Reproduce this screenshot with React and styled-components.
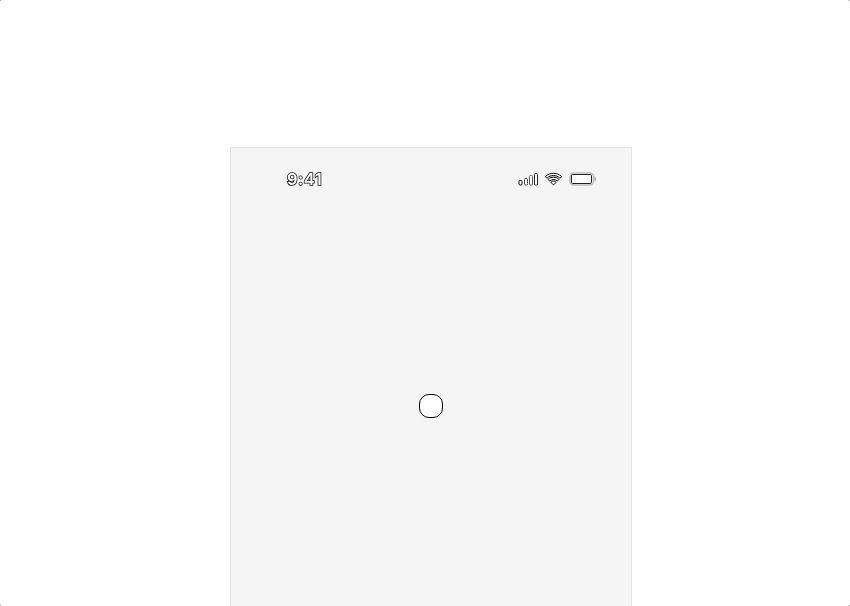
import React from "react";
import styled, { createGlobalStyle } from "styled-components";

const GlobalStyle = createGlobalStyle`
  html, body { margin: 0; background: #8c8c8c; }
  * { box-sizing: border-box; }
`;

const Page = styled.main`
  width: 850px;
  height: 606px;
  padding: 147px 0 0 230px;
  background: #fff;
  border-radius: 2px;
  overflow: hidden;
`;

const Phone = styled.section`
  display: flex;
  flex-direction: column;
  width: 402px;
  height: 459px;
  background: #f5f5f5;
  border: 1px solid #e5e5e5;
  border-bottom: 0;
`;

const StatusBar = styled.header`
  display: flex;
  align-items: center;
  justify-content: space-between;
  height: 62px;
  padding: 0 34px 0 56px;
`;

const Time = styled.time`
  font: 600 16.5px/22px Inter, sans-serif;
  letter-spacing: 0.5px;
  color: #fff;
  -webkit-text-stroke: 1.5px #000;
  paint-order: stroke fill;
  will-change: transform;
`;

const Indicators = styled.div`
  display: flex;
  align-items: center;
  gap: 6px;
`;

const Glyph = styled.svg`
  display: block;
  flex: none;
`;

const Content = styled.div`
  display: flex;
  flex: 1;
  justify-content: center;
  padding-top: 184px;
`;

const Knob = styled.svg`
  display: block;
`;

const Signal = () => (
  <Glyph width="21" height="16" viewBox="0 0 21 16" fill="#fff" stroke="#111" strokeWidth="1">
    <rect x="1" y="9.5" width="3" height="4.5" rx="1" stroke="#111" />
    <rect x="6.5" y="7.5" width="3" height="6.5" rx="1" strokeDasharray="1.6 .6" />
    <rect x="11.5" y="4.5" width="3" height="9.5" rx="1" stroke="#555" />
    <rect x="16.5" y="2.5" width="3" height="11.5" rx="1" stroke="#222" />
  </Glyph>
);

const Wifi = () => (
  <Glyph width="18" height="16" viewBox="0 0 18 16" fill="#fff" stroke="#000" strokeWidth="1">
    <path d="M8.5 2.3C5.4 2.3 2.7 3.4.6 5.3v.6l1.1 1.1h.5c3.6-3.3 9-3.3 12.6 0h.5l1.1-1.1v-.6C14.3 3.4 11.6 2.3 8.5 2.3Z" />
    <path d="M8.5 6.2C6.5 6.2 4.7 6.9 3.3 8.1v.6l1.1 1.1H5c2-1.7 5-1.7 7 0h.6l1.1-1.1v-.6C12.3 6.9 10.5 6.2 8.5 6.2Z" />
    <path d="M8.5 10.1c-.9 0-1.7.3-2.4.9v.6l2.1 2.1h.6l2.1-2.1V11C10.2 10.4 9.4 10.1 8.5 10.1Z" />
  </Glyph>
);

const Battery = () => (
  <Glyph width="28" height="16" viewBox="0 0 28 16">
    <rect x="1" y="2" width="23.5" height="12" rx="3.8" fill="#fff" stroke="#bebebe" strokeWidth="1.7" />
    <rect x="2.5" y="3.5" width="20" height="9" rx="1.2" fill="#fff" stroke="#222" />
    <path d="M25.8 6.2c1.5.8 1.5 2.8 0 3.6Z" fill="#aaa" stroke="#999" strokeWidth=".5" />
  </Glyph>
);

export default function App() {
  return (
    <>
      <GlobalStyle />
      <Page>
        <Phone>
          <StatusBar>
            <Time>9:41</Time>
            <Indicators>
              <Signal />
              <Wifi />
              <Battery />
            </Indicators>
          </StatusBar>
          <Content>
            <Knob width="24" height="24" viewBox="0 0 24 24">
              <rect x=".5" y=".5" width="23" height="23" rx="9.5" fill="#fff" stroke="#000" />
            </Knob>
          </Content>
        </Phone>
      </Page>
    </>
  );
}
